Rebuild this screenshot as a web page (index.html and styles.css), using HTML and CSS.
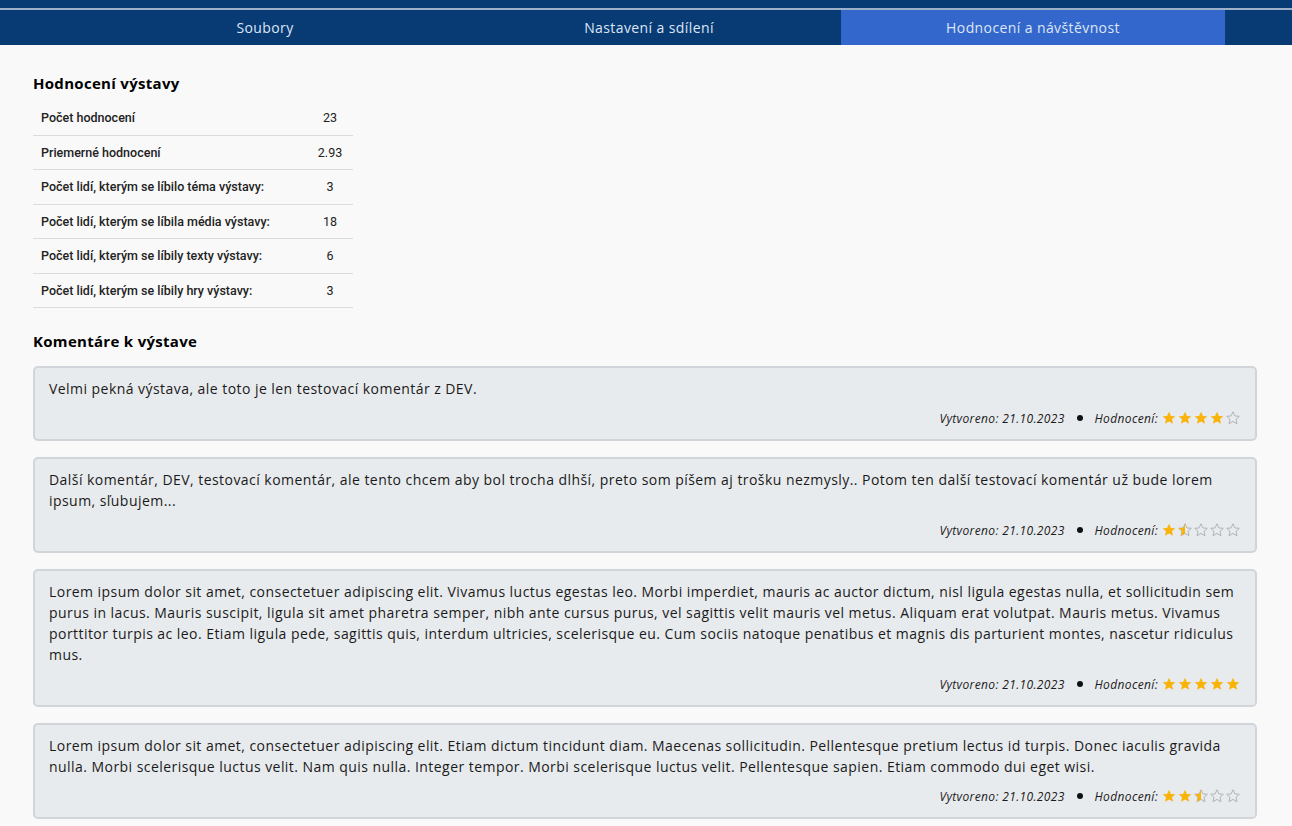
FILE: index.html
```html
<!DOCTYPE html>
<html lang="cs">
<head>
<meta charset="utf-8">
<title>Hodnocení a návštěvnost</title>
<link rel="stylesheet" href="styles.css">
</head>
<body>
<svg width="0" height="0" class="defs">
  <defs>
    <path id="star" d="M7 0.8 L8.9 4.9 L13.3 5.3 L10 8.3 L11 12.7 L7 10.4 L3 12.7 L4 8.3 L0.7 5.3 L5.1 4.9 Z"/>
    <clipPath id="half"><rect x="0" y="0" width="7" height="14"/></clipPath>
  </defs>
</svg>
<header class="topbar">
  <div class="topline"></div>
  <nav class="tabs">
    <a class="tab">Soubory</a>
    <a class="tab">Nastavení a sdílení</a>
    <a class="tab active">Hodnocení a návštěvnost</a>
  </nav>
</header>
<main class="content">
  <h2 class="section-title">Hodnocení výstavy</h2>
  <div class="stats">
    <div class="row"><span class="label">Počet hodnocení</span><span class="value">23</span></div>
    <div class="row"><span class="label">Priemerné hodnocení</span><span class="value">2.93</span></div>
    <div class="row"><span class="label">Počet lidí, kterým se líbilo téma výstavy:</span><span class="value">3</span></div>
    <div class="row"><span class="label">Počet lidí, kterým se líbila média výstavy:</span><span class="value">18</span></div>
    <div class="row"><span class="label">Počet lidí, kterým se líbily texty výstavy:</span><span class="value">6</span></div>
    <div class="row"><span class="label">Počet lidí, kterým se líbily hry výstavy:</span><span class="value">3</span></div>
  </div>

  <h2 class="section-title comments-title">Komentáre k výstave</h2>
  <div class="comments">
    <article class="comment">
      <p class="text">Velmi pekná výstava, ale toto je len testovací komentár z DEV.</p>
      <div class="meta"><span>Vytvoreno: 21.10.2023</span><span class="dot"></span><span>Hodnocení:</span>
        <span class="stars">
          <svg class="s" viewBox="0 0 14 14"><use href="#star" class="full"/></svg><svg class="s" viewBox="0 0 14 14"><use href="#star" class="full"/></svg><svg class="s" viewBox="0 0 14 14"><use href="#star" class="full"/></svg><svg class="s" viewBox="0 0 14 14"><use href="#star" class="full"/></svg><svg class="s" viewBox="0 0 14 14"><use href="#star" class="empty"/></svg>
        </span>
      </div>
    </article>
    <article class="comment">
      <p class="text">Další komentár, DEV, testovací komentár, ale tento chcem aby bol trocha dlhší, preto som píšem aj trošku nezmysly.. Potom ten další testovací komentár už bude lorem ipsum, sľubujem...</p>
      <div class="meta"><span>Vytvoreno: 21.10.2023</span><span class="dot"></span><span>Hodnocení:</span>
        <span class="stars">
          <svg class="s" viewBox="0 0 14 14"><use href="#star" class="full"/></svg><svg class="s" viewBox="0 0 14 14"><use href="#star" class="empty"/><use href="#star" class="full" clip-path="url(#half)"/></svg><svg class="s" viewBox="0 0 14 14"><use href="#star" class="empty"/></svg><svg class="s" viewBox="0 0 14 14"><use href="#star" class="empty"/></svg><svg class="s" viewBox="0 0 14 14"><use href="#star" class="empty"/></svg>
        </span>
      </div>
    </article>
    <article class="comment">
      <p class="text">Lorem ipsum dolor sit amet, consectetuer adipiscing elit. Vivamus luctus egestas leo. Morbi imperdiet, mauris ac auctor dictum, nisl ligula egestas nulla, et sollicitudin sem purus in lacus. Mauris suscipit, ligula sit amet pharetra semper, nibh ante cursus purus, vel sagittis velit mauris vel metus. Aliquam erat volutpat. Mauris metus. Vivamus porttitor turpis ac leo. Etiam ligula pede, sagittis quis, interdum ultricies, scelerisque eu. Cum sociis natoque penatibus et magnis dis parturient montes, nascetur ridiculus mus.</p>
      <div class="meta"><span>Vytvoreno: 21.10.2023</span><span class="dot"></span><span>Hodnocení:</span>
        <span class="stars">
          <svg class="s" viewBox="0 0 14 14"><use href="#star" class="full"/></svg><svg class="s" viewBox="0 0 14 14"><use href="#star" class="full"/></svg><svg class="s" viewBox="0 0 14 14"><use href="#star" class="full"/></svg><svg class="s" viewBox="0 0 14 14"><use href="#star" class="full"/></svg><svg class="s" viewBox="0 0 14 14"><use href="#star" class="full"/></svg>
        </span>
      </div>
    </article>
    <article class="comment">
      <p class="text">Lorem ipsum dolor sit amet, consectetuer adipiscing elit. Etiam dictum tincidunt diam. Maecenas sollicitudin. Pellentesque pretium lectus id turpis. Donec iaculis gravida nulla. Morbi scelerisque luctus velit. Nam quis nulla. Integer tempor. Morbi scelerisque luctus velit. Pellentesque sapien. Etiam commodo dui eget wisi.</p>
      <div class="meta"><span>Vytvoreno: 21.10.2023</span><span class="dot"></span><span>Hodnocení:</span>
        <span class="stars">
          <svg class="s" viewBox="0 0 14 14"><use href="#star" class="full"/></svg><svg class="s" viewBox="0 0 14 14"><use href="#star" class="full"/></svg><svg class="s" viewBox="0 0 14 14"><use href="#star" class="empty"/><use href="#star" class="full" clip-path="url(#half)"/></svg><svg class="s" viewBox="0 0 14 14"><use href="#star" class="empty"/></svg><svg class="s" viewBox="0 0 14 14"><use href="#star" class="empty"/></svg>
        </span>
      </div>
    </article>
  </div>
</main>
</body>
</html>
```

FILE: styles.css
```css
* { box-sizing: border-box; }
html, body { margin: 0; padding: 0; }
body {
  background: #f9f9f9;
  font-family: "Open Sans", "Noto Sans", sans-serif;
  color: #1a1a1a;
}
.defs { position: absolute; width: 0; height: 0; }

.topbar { background: #083a74; }
.topline {
  height: 10px;
  border-bottom: 2px solid #9fb1c9;
}
.tabs {
  display: flex;
  padding-left: 73px;
  height: 35px;
}
.tab {
  width: 384px;
  display: flex;
  align-items: center;
  justify-content: center;
  font-size: 14px;
  color: #dce6f4;
  letter-spacing: 0.4px;
}
.tab.active { background: #3467cc; }

.content { padding: 28px 35px 0 33px; }
.section-title {
  margin: 0 0 8px;
  font-size: 15px;
  line-height: 20px;
  font-weight: 700;
  letter-spacing: 0.3px;
  color: #000;
}
.comments-title { margin: 23px 0 15px; }

.stats { width: 320px; }
.row {
  display: flex;
  align-items: center;
  height: 34.5px;
  border-bottom: 1px solid #dcdcdc;
  font-family: Roboto, "Liberation Sans", sans-serif;
  font-size: 12.5px;
  color: #222;
}
.label { flex: 1; padding-left: 8px; font-weight: 500; }
.value { width: 46px; text-align: center; }

.comments { display: flex; flex-direction: column; gap: 16px; }
.comment {
  background: #e8ebee;
  border: 2px solid #d1d5da;
  border-radius: 5px;
  padding: 10px 15px 11px 14px;
}
.text {
  margin: 0;
  font-size: 14px;
  line-height: 21px;
  letter-spacing: 0.45px;
  color: #1a1a1a;
}
.meta {
  margin-top: 9px;
  height: 20px;
  display: flex;
  justify-content: flex-end;
  align-items: center;
  gap: 10px;
  font-size: 12px;
  font-style: italic;
  letter-spacing: 0.35px;
  color: #1a1a1a;
}
.dot {
  width: 6px;
  height: 6px;
  border-radius: 50%;
  background: #111;
  margin: 0 2px;
}
.stars { display: flex; gap: 2px; margin-left: -6px; }
.s { width: 14px; height: 14px; display: block; }
.full { fill: #f8b40a; }
.empty { fill: none; stroke: #a9adb2; stroke-width: 0.9; }
```
